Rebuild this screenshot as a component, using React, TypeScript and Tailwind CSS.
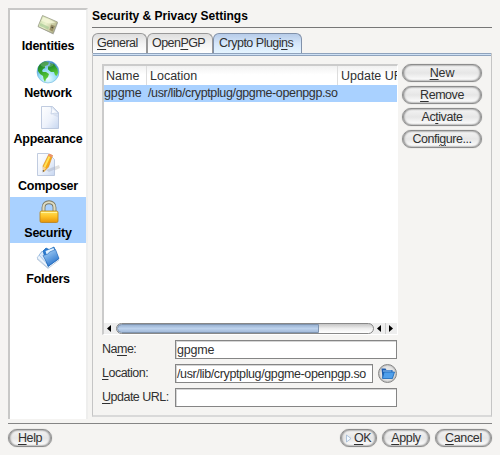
import type { ReactNode } from 'react';

const U = ({ children }: { children: ReactNode }) => (
  <span className="underline decoration-1 underline-offset-[2px]">{children}</span>
);

function IdentityIcon() {
  return (
    <svg width="22" height="22" viewBox="0 0 22 22">
      <defs>
        <linearGradient id="stamp" x2="1" y2=".6">
          <stop stopColor="#c6dca8" />
          <stop offset=".5" stopColor="#eaf0cc" />
          <stop offset="1" stopColor="#b5b488" />
        </linearGradient>
      </defs>
      <path d="M5.500 2 21 9 16.500 20.500 1 13Z" fill="#777" opacity=".5" />
      <path d="M5.500 1.500 20.500 8 16 19.500 1 12.500Z" fill="url(#stamp)" stroke="#9a9c87" strokeWidth=".8" />
      <path d="M6 3 18.500 8.500 12 9.500 4.500 7Z" fill="#f5f6da" opacity=".8" />
      <path d="M3.500 9 12 13 11 15.500 2.500 11.800Z" fill="#9fc48d" opacity=".6" />
      <path d="M14 10.500 18 12 15.500 17.500 12.500 16Z" fill="#9a9068" />
      <path d="M14.500 13 16 13.800" stroke="#4e4b38" strokeWidth="1.400" />
    </svg>
  );
}

function GlobeIcon() {
  return (
    <svg width="24" height="24" viewBox="0 0 24 24">
      <defs>
        <radialGradient id="sea" cx=".5" cy=".8" r=".85">
          <stop stopColor="#f0feff" />
          <stop offset=".5" stopColor="#8fdaf7" />
          <stop offset="1" stopColor="#1f62b4" />
        </radialGradient>
        <linearGradient id="land" x2=".3" y2="1">
          <stop stopColor="#156f2a" />
          <stop offset=".5" stopColor="#2fa02c" />
          <stop offset="1" stopColor="#5fcd3c" />
        </linearGradient>
      </defs>
      <circle cx="12" cy="12" r="11" fill="url(#sea)" stroke="#6db4dc" strokeWidth=".6" />
      <path d="M2 8C3 4 7 1.500 10 1.500l3 1-1 2.500-3 1 0 2-2 1-1 2 1 1 3 0 3 2-1 3-2 2-1 3-1.500-3-.500-3-3-2-2-3Z" fill="url(#land)" />
      <path d="m14 3 4 1 3.500 5 .500 4-1.500 3-1.500-1-1-3-3 0-3-2.500 0-3 2.500-1.500Z" fill="url(#land)" />
      <ellipse cx="11" cy="4.500" rx="6.500" ry="3" fill="white" opacity=".2" />
    </svg>
  );
}

function PageShape() {
  return (
    <>
      <defs>
        <linearGradient id="paper" x2="1" y2="1">
          <stop stopColor="#fff" />
          <stop offset=".55" stopColor="#edf2fb" />
          <stop offset="1" stopColor="#c6d6f0" />
        </linearGradient>
      </defs>
      <path d="M2.500.500h11l6 6v16h-17z" fill="url(#paper)" stroke="#b1bfd8" strokeWidth=".8" />
    </>
  );
}

function PageIcon() {
  return (
    <svg width="22" height="24" viewBox="0 0 22 24" className="ml-[4px]">
      <PageShape />
      <path d="M12 .500q1.500 3 0 7.500 4-1.500 7.500-.500z" fill="#f9fbff" stroke="#b9c7df" strokeWidth=".7" />
      <path d="M13 8.500q3-1 6.500 0v3z" fill="#c5d2e7" opacity=".5" />
    </svg>
  );
}

function ComposeIcon() {
  return (
    <svg width="26" height="24" viewBox="0 0 26 24" className="ml-0">
      <path d="M11 17 24 12 25 15 14 20Z" fill="#999" opacity=".3" />
      <PageShape />
      <path d="M11 17 19.500 13.500v3L14 19Z" fill="#8c93a5" opacity=".3" />
      <path d="m14 1 3.500 1.500L13.500 14l-5 5-.500-6Z" fill="#f7a817" stroke="#d58b22" strokeWidth=".6" />
      <path d="m14.500 3.500-5 10.500" stroke="#ffe35a" strokeWidth="1.800" />
      <path d="m14 .800 3.700 1.500-.800 2-3.600-1.600Z" fill="#e99174" />
      <path d="m8 13.500 3 1.500-3 4Z" fill="#f1d3a0" />
      <path d="m7.800 17 1.200.500-1.200 2Z" fill="#333" />
    </svg>
  );
}

function LockIcon() {
  return (
    <svg width="22" height="24" viewBox="0 0 22 24" className="ml-px">
      <defs>
        <linearGradient id="gold" x2="0" y2="1">
          <stop stopColor="#ffe45a" />
          <stop offset=".5" stopColor="#fdc126" />
          <stop offset="1" stopColor="#e59409" />
        </linearGradient>
      </defs>
      <path d="M5.500 12V7.500c0-7 11-7 11 0V12" fill="none" stroke="#777560" strokeWidth="3.800" />
      <path d="M5.500 12V7.500c0-7 11-7 11 0V12" fill="none" stroke="#dedbc1" strokeWidth="2.200" />
      <rect x="2" y="11" width="18" height="11.500" rx="1.500" fill="url(#gold)" stroke="#b98018" strokeWidth=".8" />
      <path d="M3 12.500h16" stroke="#fff5a0" />
    </svg>
  );
}

function FoldersIcon() {
  return (
    <svg width="24" height="24" viewBox="0 0 24 24">
      <defs>
        <linearGradient id="folder" x2=".6" y2="1">
          <stop stopColor="#b5dcfc" />
          <stop offset="1" stopColor="#2b75cc" />
        </linearGradient>
      </defs>
      <path d="m1 12 5-7 9 11-3 6Z" fill="#eef5fd" stroke="#a3c0df" strokeWidth=".8" />
      <path d="m3 9 5-5 10 10-5 6Z" fill="#d9e9fa" stroke="#8fb6e0" strokeWidth=".7" />
      <path d="m7 5 3-3 3 1.500L18 1l4.500 12L12 20.500Z" fill="#2b7ad0" stroke="#1767b8" strokeWidth=".7" />
      <path d="m9.500 5 8-3 3 8-8 5Z" fill="#e4f3ff" />
      <path d="m7 9.500 5-1.500 1.500-2 6-2.500 3.500 9L12.500 20Z" fill="url(#folder)" stroke="#2468b8" strokeWidth=".6" />
      <path d="m1 13 11 9.500L23 14" fill="none" stroke="#b4c3d6" strokeWidth=".8" />
    </svg>
  );
}

function Item({ icon, label, selected = false }: { icon: ReactNode; label: string; selected?: boolean }) {
  return (
    <div className={'flex h-[46.700px] flex-col items-center ' + (selected ? 'bg-[#a9d1ff]' : '')}>
      <div className="flex h-[29px] items-center justify-center pt-px">{icon}</div>
      <div className="text-[12.500px] font-bold leading-[15px] tracking-[-0.250px] text-black">{label}</div>
    </div>
  );
}

function Btn({ children, className }: { children: ReactNode; className: string }) {
  return (
    <div
      className={
        'flex h-[18px] items-center justify-center rounded-full border border-[#8c8c8c] bg-linear-to-b from-[#f4f4f4] via-[#e6e6e6] to-white text-[12.500px] leading-none whitespace-nowrap shadow-[inset_1px_0_2px_#888,inset_-1px_0_2px_#888,0_0_1px_#999] ' +
        className
      }
    >
      {children}
    </div>
  );
}

function Tab({ children, className }: { children: ReactNode; className: string }) {
  return (
    <div className={'h-[20px] rounded-t-[6px] border border-b-0 text-[12.500px] leading-[19px] whitespace-nowrap ' + className}>
      {children}
    </div>
  );
}

const field =
  'h-[19px] border border-[#858585] bg-white pl-px text-[12.500px] leading-[18px] whitespace-nowrap shadow-[inset_1px_1px_0_#d5d5d5]';

export default function App() {
  return (
    <div className="h-[455px] w-[500px] overflow-hidden bg-[#f5f4f2] px-2 pt-2 font-['Liberation_Sans',Arial,sans-serif] text-[#303030]">
      <div className="flex h-[411px]">
        <aside className="w-20 shrink-0 border-t-2 border-r-2 border-l-2 border-[#c8c8c7] border-r-[#eeeeed] bg-white">
          <Item icon={<IdentityIcon />} label="Identities" />
          <Item icon={<GlobeIcon />} label="Network" />
          <Item icon={<PageIcon />} label="Appearance" />
          <Item icon={<ComposeIcon />} label="Composer" />
          <Item icon={<LockIcon />} label="Security" selected />
          <Item icon={<FoldersIcon />} label="Folders" />
        </aside>

        <main className="ml-1 w-[400px]">
          <h1 className="h-[19px] text-[12px] font-bold leading-[16px] tracking-[-0.010px] text-black">Security &amp; Privacy Settings</h1>
          <div className="h-px bg-[#777]" />
          <div className="mt-[5px] flex h-[20px]">
            <Tab className="w-[55px] border-[#999] bg-linear-to-b from-[#dedede] via-[#f3f3f3] to-white pl-1 tracking-[-0.550px]">
              <U>G</U>eneral
            </Tab>
            <Tab className="w-[66px] border-[#999] bg-linear-to-b from-[#dedede] via-[#f3f3f3] to-white pl-1 tracking-[-0.550px]">
              Open<U>P</U>GP
            </Tab>
            <Tab className="w-[89px] border-[#8191aa] bg-linear-to-b from-[#b7cce9] via-[#d5e6fa] to-[#e5f4ff] pl-[5px] tracking-[-0.500px]">
              Crypto Plugi<U>n</U>s
            </Tab>
          </div>

          <section className="h-[364px] border-x border-b-2 border-[#c5c5c5] border-b-[#d9d9d9]">
            <div className="h-[3px] border-y border-y-[#8fa3bd] bg-[#cfe1f5]" />
            <div className="flex pt-[8px] pl-[9px]">
              <div className="h-[271px] w-[296px] border-t-2 border-r border-b border-l-2 border-[#cbcbcb] border-r-white border-b-white bg-white">
                <div className="flex h-[19px] overflow-hidden bg-linear-to-b from-[#f1f1f1] to-white to-45% text-[12.500px] leading-[20px] whitespace-nowrap">
                  <div className="w-[43px] shrink-0 border-r border-[#ddd] pl-[2px]">Name</div>
                  <div className="w-[191px] shrink-0 border-r border-[#ddd] pl-[3px]">Location</div>
                  <div className="w-[59px] overflow-hidden pl-[3px]">Update URL</div>
                </div>
                <div className="flex h-[17px] bg-[#a9d1ff] text-[12.500px] leading-[17px] whitespace-nowrap">
                  <div className="w-[44px] shrink-0 tracking-[-0.100px]">gpgme</div>
                  <div className="tracking-[-0.360px]">/usr/lib/cryptplug/gpgme-openpgp.so</div>
                </div>
                <div className="h-[221px]" />
                <div className="flex h-[11px] items-center bg-[#eee]">
                  <svg width="12" height="11" viewBox="0 0 12 11"><path d="M7 2v7L3 5.500z" fill="#000" /></svg>
                  <div className="h-[11px] w-[258px] rounded-full border border-[#888] bg-linear-to-b from-[#c5c5c5] via-[#eee] to-white">
                    <div className="h-[9px] w-[202px] rounded-l-full rounded-r-[3px] border border-[#8095b0] bg-linear-to-b from-[#9ab3d3] via-[#bdd2ec] to-[#a3bbda]" />
                  </div>
                  <svg width="11" height="11" viewBox="0 0 11 11"><path d="M7 2v7L3 5.500z" fill="#000" /></svg>
                  <div className="h-[11px] w-px bg-[#ccc]" />
                  <svg width="11" height="11" viewBox="0 0 11 11"><path d="M3 2v7l4-3.500z" fill="#000" /></svg>
                </div>
              </div>
              <div className="ml-[4px] flex w-20 flex-col gap-[4px] tracking-[-0.450px]">
                <Btn className="w-20"><span className="tracking-[-0.100px]"><U>N</U>ew</span></Btn>
                <Btn className="w-20"><span><U>R</U>emove</span></Btn>
                <Btn className="w-20"><span>Ac<U>t</U>ivate</span></Btn>
                <Btn className="w-20"><span>Confi<U>g</U>ure...</span></Btn>
              </div>
            </div>

            <div className="flex flex-col gap-[5px] pt-[5px] pl-[9px] text-[12.500px] leading-[19px] whitespace-nowrap">
              <div className="flex h-[19px]">
                <div className="w-[73px] tracking-[-0.500px]">Na<U>m</U>e:</div>
                <div className={field + ' w-[222px] tracking-[-0.200px]'}>gpgme</div>
              </div>
              <div className="flex h-[19px]">
                <div className="w-[73px] tracking-[-0.500px]"><U>L</U>ocation:</div>
                <div className={field + ' w-[198px] tracking-[-0.380px]'}>/usr/lib/cryptplug/gpgme-openpgp.so</div>
                <div className="ml-[5px] flex h-[19px] w-[19px] items-center justify-center rounded-full border border-[#858585] bg-[#e5e5e5] shadow-[inset_0_0_2px_#888]">
                  <svg width="15" height="13" viewBox="0 0 15 13">
                    <path d="M1.500 1.500h4l1 1.500h6v8h-10z" fill="#1d5cae" />
                    <path d="M4 5h10.500l-2 6.500h-10z" fill="#4f9feb" stroke="#1765b5" strokeWidth=".8" />
                    <path d="M3 4h8.500" stroke="#9acfff" />
                  </svg>
                </div>
              </div>
              <div className="flex h-[19px]">
                <div className="w-[73px] tracking-[-0.500px]"><U>U</U>pdate URL:</div>
                <div className={field + ' w-[222px]'} />
              </div>
            </div>
          </section>
        </main>
      </div>

      <div className="mt-[4px] h-px w-[484px] bg-[#858585]" />
      <div className="mt-[5px] flex w-[484px]">
        <Btn className="w-[44px]"><span className="tracking-[-0.400px]"><U>H</U>elp</span></Btn>
        <Btn className="ml-auto w-[37px]">
          <svg width="6" height="9" viewBox="0 0 6 9" className="mr-[2px]"><path d="M.500 1v7L5 4.500z" fill="#f4faff" stroke="#9eb8d4" strokeWidth=".8" /></svg>
          <span className="tracking-[-0.500px]"><U>O</U>K</span>
        </Btn>
        <Btn className="ml-[5px] w-[48px]"><span className="tracking-[-0.350px]"><U>A</U>pply</span></Btn>
        <Btn className="ml-[5px] w-[57px]"><span className="tracking-[-0.350px]"><U>C</U>ancel</span></Btn>
      </div>
    </div>
  );
}
